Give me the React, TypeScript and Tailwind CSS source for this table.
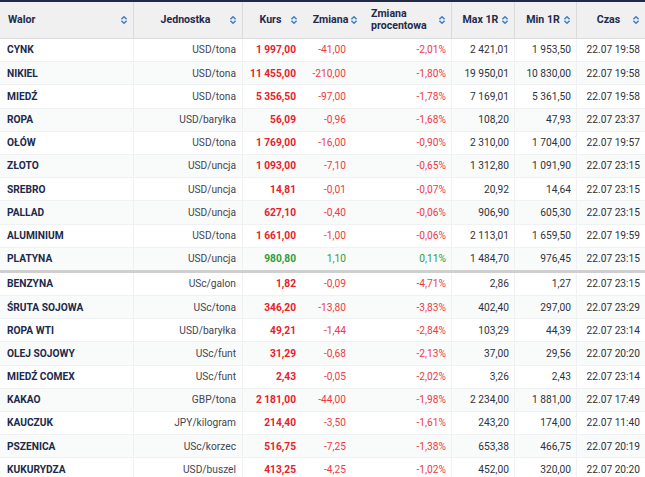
type Row = {
  name: string;
  unit: string;
  kurs: string;
  zmiana: string;
  proc: string;
  max: string;
  min: string;
  czas: string;
  up?: boolean;
};

const groupA: Row[] = [
  { name: "CYNK", unit: "USD/tona", kurs: "1 997,00", zmiana: "-41,00", proc: "-2,01%", max: "2 421,01", min: "1 953,50", czas: "22.07 19:58" },
  { name: "NIKIEL", unit: "USD/tona", kurs: "11 455,00", zmiana: "-210,00", proc: "-1,80%", max: "19 950,01", min: "10 830,00", czas: "22.07 19:58" },
  { name: "MIEDŹ", unit: "USD/tona", kurs: "5 356,50", zmiana: "-97,00", proc: "-1,78%", max: "7 169,01", min: "5 361,50", czas: "22.07 19:58" },
  { name: "ROPA", unit: "USD/baryłka", kurs: "56,09", zmiana: "-0,96", proc: "-1,68%", max: "108,20", min: "47,93", czas: "22.07 23:37" },
  { name: "OŁÓW", unit: "USD/tona", kurs: "1 769,00", zmiana: "-16,00", proc: "-0,90%", max: "2 310,00", min: "1 704,00", czas: "22.07 19:57" },
  { name: "ZŁOTO", unit: "USD/uncja", kurs: "1 093,00", zmiana: "-7,10", proc: "-0,65%", max: "1 312,80", min: "1 091,90", czas: "22.07 23:15" },
  { name: "SREBRO", unit: "USD/uncja", kurs: "14,81", zmiana: "-0,01", proc: "-0,07%", max: "20,92", min: "14,64", czas: "22.07 23:15" },
  { name: "PALLAD", unit: "USD/uncja", kurs: "627,10", zmiana: "-0,40", proc: "-0,06%", max: "906,90", min: "605,30", czas: "22.07 23:15" },
  { name: "ALUMINIUM", unit: "USD/tona", kurs: "1 661,00", zmiana: "-1,00", proc: "-0,06%", max: "2 113,01", min: "1 659,50", czas: "22.07 19:59" },
  { name: "PLATYNA", unit: "USD/uncja", kurs: "980,80", zmiana: "1,10", proc: "0,11%", max: "1 484,70", min: "976,45", czas: "22.07 23:15", up: true },
];

const groupB: Row[] = [
  { name: "BENZYNA", unit: "USc/galon", kurs: "1,82", zmiana: "-0,09", proc: "-4,71%", max: "2,86", min: "1,27", czas: "22.07 23:15" },
  { name: "ŚRUTA SOJOWA", unit: "USc/tona", kurs: "346,20", zmiana: "-13,80", proc: "-3,83%", max: "402,40", min: "297,00", czas: "22.07 23:29" },
  { name: "ROPA WTI", unit: "USD/baryłka", kurs: "49,21", zmiana: "-1,44", proc: "-2,84%", max: "103,29", min: "44,39", czas: "22.07 23:14" },
  { name: "OLEJ SOJOWY", unit: "USc/funt", kurs: "31,29", zmiana: "-0,68", proc: "-2,13%", max: "37,00", min: "29,56", czas: "22.07 20:20" },
  { name: "MIEDŹ COMEX", unit: "USc/funt", kurs: "2,43", zmiana: "-0,05", proc: "-2,02%", max: "3,26", min: "2,43", czas: "22.07 23:14" },
  { name: "KAKAO", unit: "GBP/tona", kurs: "2 181,00", zmiana: "-44,00", proc: "-1,98%", max: "2 234,00", min: "1 881,00", czas: "22.07 17:49" },
  { name: "KAUCZUK", unit: "JPY/kilogram", kurs: "214,40", zmiana: "-3,50", proc: "-1,61%", max: "243,20", min: "174,00", czas: "22.07 11:40" },
  { name: "PSZENICA", unit: "USc/korzec", kurs: "516,75", zmiana: "-7,25", proc: "-1,38%", max: "653,38", min: "466,75", czas: "22.07 20:19" },
  { name: "KUKURYDZA", unit: "USD/buszel", kurs: "413,25", zmiana: "-4,25", proc: "-1,02%", max: "452,00", min: "320,00", czas: "22.07 20:20" },
];

const COLS = "grid grid-cols-[134px_109px_60px_60px_89px_63px_62px_68px]";

function SortIcon() {
  return (
    <svg width="8" height="10" viewBox="0 0 8 10" className="shrink-0">
      <path d="M1.4 4.3 L4 1.7 L6.6 4.3" fill="none" stroke="#3f7fc6" strokeWidth="1.5" />
      <path d="M1.4 5.7 L4 8.3 L6.6 5.7" fill="none" stroke="#3f7fc6" strokeWidth="1.5" />
    </svg>
  );
}

function HeadCell({
  label,
  align = "center",
  border = false,
}: {
  label: React.ReactNode;
  align?: "left" | "center";
  border?: boolean;
}) {
  return (
    <div
      className={`flex items-center pl-2 pr-[5px] ${border ? "border-r border-[#dadada]" : ""}`}
    >
      <span
        className={`flex-1 leading-[12px] ${align === "left" ? "text-left" : "text-center"}`}
      >
        {label}
      </span>
      <SortIcon />
    </div>
  );
}

function DataRow({ row, shaded, last }: { row: Row; shaded: boolean; last?: boolean }) {
  const changeColor = row.up ? "text-[#2f9d3a]" : "text-[#ee3a44]";
  const kursColor = row.up ? "text-[#2f9d3a]" : "text-[#e82029]";
  return (
    <div
      className={`${COLS} ${last ? "h-[25.2px] border-b-[3px] border-b-[#cfcfcf]" : "h-[23.2px] border-b border-b-[#eff1f2]"} ${shaded ? "bg-[#f9fafa]" : "bg-white"} items-stretch whitespace-nowrap`}
    >
      <div className="flex items-center border-r border-[#eff1f2] pl-[7px] font-bold text-[#1c2a4c]">
        {row.name}
      </div>
      <div className="flex items-center justify-end border-r border-[#eff1f2] pr-[6px] text-[#3f4552]">
        {row.unit}
      </div>
      <div className={`flex items-center justify-end pr-[7px] font-bold ${kursColor}`}>
        {row.kurs}
      </div>
      <div className={`flex items-center justify-end pr-[17px] ${changeColor}`}>
        {row.zmiana}
      </div>
      <div className={`flex items-center justify-end border-r border-[#eff1f2] pr-[5px] ${changeColor}`}>
        {row.proc}
      </div>
      <div className="flex items-center justify-end border-r border-[#eff1f2] pr-[5px] text-[#2f333b]">
        {row.max}
      </div>
      <div className="flex items-center justify-end border-r border-[#eff1f2] pr-[5px] text-[#2f333b]">
        {row.min}
      </div>
      <div className="flex items-center justify-end pr-[5px] text-[#2f333b]">
        {row.czas}
      </div>
    </div>
  );
}

export default function App() {
  return (
    <div className="w-[645px] h-[477px] overflow-hidden bg-white font-['Roboto',sans-serif] text-[10.2px]">
      {/* nagłówek */}
      <div
        className={`${COLS} h-[39px] border-t-2 border-t-[#1e2a46] border-b border-b-[#dcdcdc] bg-[#f0f0f0] text-[10.6px] font-bold text-[#1f2b4d]`}
      >
        <HeadCell label="Walor" align="left" border />
        <HeadCell label="Jednostka" border />
        <HeadCell label="Kurs" />
        <HeadCell label="Zmiana" />
        <HeadCell
          label={
            <>
              Zmiana
              <br />
              procentowa
            </>
          }
          align="left"
          border
        />
        <HeadCell label="Max 1R" border />
        <HeadCell label="Min 1R" border />
        <HeadCell label="Czas" />
      </div>

      {groupA.map((row, i) => (
        <DataRow key={row.name} row={row} shaded={i % 2 === 1} last={i === groupA.length - 1} />
      ))}
      {groupB.map((row, i) => (
        <DataRow key={row.name} row={row} shaded={i % 2 === 1} />
      ))}
    </div>
  );
}
